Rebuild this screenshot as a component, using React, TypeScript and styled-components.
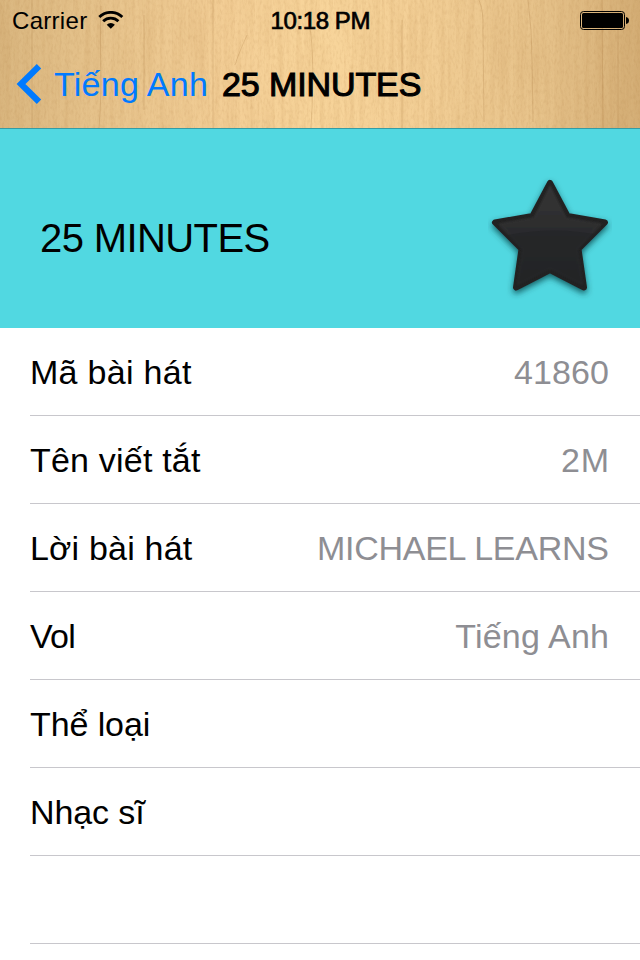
import React from "react";
import styled, { createGlobalStyle } from "styled-components";

const GlobalStyle = createGlobalStyle`
  * { box-sizing: border-box; }
  body { margin: 0; background: #fff; }
`;

const Screen = styled.div`
  width: 640px;
  height: 960px;
  overflow: hidden;
  background: #fff;
  color: #000;
  font-family: "Liberation Sans", Arial, sans-serif;
  display: flex;
  flex-direction: column;
`;

const Header = styled.header`
  position: relative;
  isolation: isolate;
  flex: none;
  height: 128px;
  overflow: hidden;
`;

const WoodTexture = styled.svg`
  position: absolute;
  inset: 0;
  z-index: -1;
`;

const StatusBar = styled.div`
  display: grid;
  grid-template-columns: 1fr auto 1fr;
  align-items: center;
  height: 41px;
  padding: 1px 11px 0 12px;
`;

const Carrier = styled.div`
  display: flex;
  align-items: center;
  gap: 11px;
`;

const StatusIcon = styled.svg`
  justify-self: end;
  margin-bottom: 2px;
`;

const NavBar = styled.nav`
  display: flex;
  align-items: center;
  height: 87px;
`;

const BackButton = styled.button`
  display: flex;
  align-items: center;
  gap: 12px;
  width: 222px;
  padding: 0 0 0 16px;
  border: 0;
  background: none;
  color: #007aff;
  font: inherit;
`;

const Text = styled.span<{ $size?: number; $track?: number; $stroke?: number }>`
  font-size: ${(p) => p.$size ?? 34}px;
  letter-spacing: ${(p) => p.$track ?? 0}px;
  margin-right: ${(p) => -(p.$track ?? 0)}px;
  -webkit-text-stroke: ${(p) => p.$stroke ?? 0}px currentColor;
  line-height: 1.2;
  white-space: nowrap;
`;

const Hero = styled.section`
  flex: none;
  display: flex;
  align-items: center;
  justify-content: space-between;
  height: 200px;
  padding: 18px 28px 0 40px;
  border-top: 1px solid #359ba4;
  background: #51d8e1;
`;

const List = styled.ul`
  margin: 0;
  padding: 0 0 0 30px;
  list-style: none;
`;

const Row = styled.li`
  display: flex;
  align-items: center;
  justify-content: space-between;
  height: 88px;
  padding-right: 31px;
  box-shadow: inset 0 -1px #c8c7cc;
`;

const Value = styled(Text)`
  color: #8e8e93;
`;

const rows = [
  { label: "Mã bài hát", value: "41860", labelTrack: 0.3, valueTrack: 0.1 },
  { label: "Tên viết tắt", value: "2M", labelTrack: 0.2, valueTrack: 0.8 },
  { label: "Lời bài hát", value: "MICHAEL LEARNS", labelTrack: 0.2, valueTrack: -0.25 },
  { label: "Vol", value: "Tiếng Anh", labelTrack: -0.7, valueTrack: 0.25 },
  { label: "Thể loại", value: "", labelTrack: -0.1, valueTrack: 0 },
  { label: "Nhạc sĩ", value: "", labelTrack: -0.1, valueTrack: 0 },
  { label: "", value: "", labelTrack: 0, valueTrack: 0 },
];

const Wood = () => (
  <WoodTexture width="640" height="128" viewBox="0 0 640 128" aria-hidden>
    <defs>
      <linearGradient id="wood" x1="0" x2="1" y1="0" y2="0">
        <stop offset="0" stopColor="#dab780" />
        <stop offset="0.15" stopColor="#e6c38c" />
        <stop offset="0.35" stopColor="#f3ce96" />
        <stop offset="0.5" stopColor="#f8d59b" />
        <stop offset="0.66" stopColor="#f3cf96" />
        <stop offset="0.85" stopColor="#e6c28a" />
        <stop offset="1" stopColor="#d4ae76" />
      </linearGradient>
      <filter id="grain" x="0" y="0" width="100%" height="100%" colorInterpolationFilters="sRGB">
        <feTurbulence type="fractalNoise" baseFrequency="0.2 0.01" numOctaves="3" seed="8" />
        <feColorMatrix values="0 0 0 0 0.72  0 0 0 0 0.52  0 0 0 0 0.28  1 0 0 0 -0.36" />
      </filter>
      <filter id="speckle" x="0" y="0" width="100%" height="100%" colorInterpolationFilters="sRGB">
        <feTurbulence type="fractalNoise" baseFrequency="0.45 0.2" numOctaves="2" seed="3" />
        <feColorMatrix values="0 0 0 0 0.6  0 0 0 0 0.4  0 0 0 0 0.18  0.9 0 0 0 -0.4" />
      </filter>
    </defs>
    <rect width="640" height="128" fill="url(#wood)" />
    <rect width="640" height="128" filter="url(#grain)" opacity="0.3" />
    <rect width="640" height="128" filter="url(#speckle)" opacity="0.28" />
    <g fill="none" stroke="#a9773e" strokeOpacity="0.25" strokeWidth="1">
      <path d="M32 0V128M101 6C99 45 103 82 99 128M144 15V110M213 0V128M247 35Q238 55 235 65M307 15Q316 42 311 128M402 20V128" />
      <path d="M479 0Q484 12 483 30L484 122M528 0Q532 30 532 60L533 122M602 0L603 128M618 10V128" />
    </g>
  </WoodTexture>
);

const starPath =
  "M550 183L567.5 216L605 222.5L578.5 249L584 287.5L550 270L516 287.5L521.5 249L495 222.5L532.5 216Z";

const Star = () => (
  <svg width="124" height="124" viewBox="488 176 124 124" role="img" aria-label="Favorite">
    <defs>
      <linearGradient id="starFill" x1="0" y1="0" x2="0" y2="1">
        <stop offset="0" stopColor="#343435" />
        <stop offset="0.4" stopColor="#2d2d2e" />
        <stop offset="1" stopColor="#252627" />
      </linearGradient>
      <filter id="shadow" x="-15%" y="-15%" width="130%" height="135%">
        <feDropShadow dx="0" dy="3" stdDeviation="3" floodColor="#06363a" floodOpacity="0.75" />
      </filter>
      <clipPath id="starClip">
        <path d={starPath} />
      </clipPath>
      <filter id="soft">
        <feGaussianBlur stdDeviation="0.8" />
      </filter>
    </defs>
    <path
      d={starPath}
      fill="#222324"
      stroke="#222324"
      strokeWidth="6"
      strokeLinejoin="round"
      filter="url(#shadow)"
    />
    <path
      d="M550 186L566 218L601 224L577 249L582 284L550 268L518 284L523 249L499 224L534 218Z"
      fill="url(#starFill)"
      stroke="#39393a"
      strokeWidth="1.2"
      strokeOpacity="0.7"
      strokeLinejoin="round"
      filter="url(#soft)"
    />
    <path d="M488 240Q550 222 612 238V300H488Z" fill="#202123" opacity="0.5" clipPath="url(#starClip)" />
  </svg>
);

const WifiIcon = () => (
  <StatusIcon width="26" height="18" viewBox="0 0 26 18" aria-hidden>
    <g fill="none" stroke="#000" strokeWidth="2.8">
      <path d="M1.3 6A16.5 16.5 0 0 1 24.3 6" />
      <path d="M5.2 10.2A11 11 0 0 1 20.4 10.2" />
    </g>
    <path d="M8.7 13.7A6 6 0 0 1 16.900 13.7L12.8 17.8Z" />
  </StatusIcon>
);

export default function App() {
  return (
    <>
      <GlobalStyle />
      <Screen>
        <Header>
          <Wood />
          <StatusBar>
            <Carrier>
              <Text $size={24} $track={0.3}>Carrier</Text>
              <WifiIcon />
            </Carrier>
            <Text $size={24} $track={-0.4} $stroke={0.7}>10:18 PM</Text>
            <StatusIcon width="49" height="19" viewBox="0 0 49 19" aria-hidden>
              <rect x="0.5" y="0.5" width="44" height="18" rx="3" fill="none" stroke="#000" />
              <rect x="2" y="2" width="41" height="15" rx="1.5" />
              <path d="M46 6Q49 6.5 49 9.5T46 13Z" />
            </StatusIcon>
          </StatusBar>
          <NavBar>
            <BackButton>
              <svg width="26" height="40" viewBox="0 0 26 40" aria-hidden>
                <path d="M23 2.300L5 20L23 37.700" fill="none" stroke="#007aff" strokeWidth="6.200" />
              </svg>
              <Text $track={0.25}>Tiếng Anh</Text>
            </BackButton>
            <Text $track={-0.1} $stroke={1.1}>25 MINUTES</Text>
          </NavBar>
        </Header>
        <Hero>
          <Text $size={40} $track={-0.6}>25 MINUTES</Text>
          <Star />
        </Hero>
        <List>
          {rows.map((row, i) => (
            <Row key={i}>
              <Text $track={row.labelTrack}>{row.label}</Text>
              <Value $track={row.valueTrack}>{row.value}</Value>
            </Row>
          ))}
        </List>
      </Screen>
    </>
  );
}
